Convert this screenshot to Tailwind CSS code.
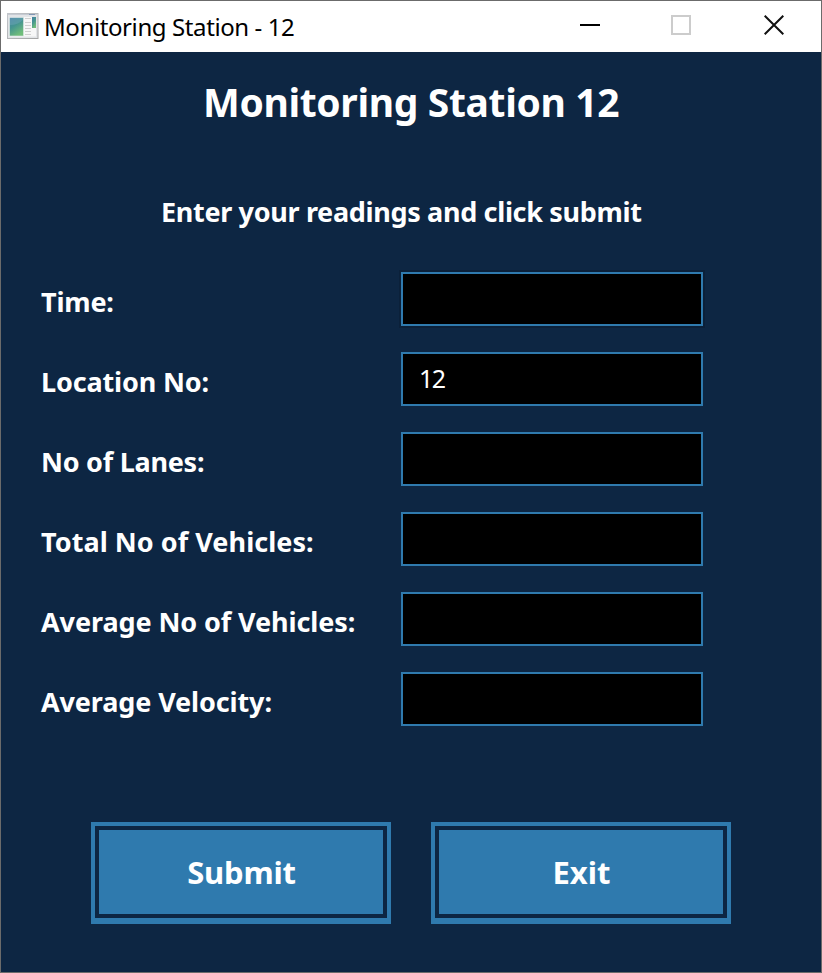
<!DOCTYPE html>
<html lang="en">
<head>
<meta charset="utf-8">
<title>Monitoring Station - 12</title>
<script src="https://cdn.jsdelivr.net/npm/@tailwindcss/browser@4"></script>
</head>
<body class="w-[822px] h-[973px] overflow-hidden font-['Noto_Sans','Open_Sans',sans-serif]">
<div class="w-[822px] h-[973px] border border-[#6b6b6b] bg-[#0d2643] flex flex-col text-white">
  <header class="h-[51px] bg-white flex items-start shrink-0 text-black">
    <svg class="ml-[6px] mt-3 shrink-0" width="32" height="26" viewBox="0 0 32 26">
      <defs>
        <linearGradient id="pane" x1="0" y1="0" x2="0.5" y2="1"><stop offset="0" stop-color="#4680a4"/><stop offset="0.5" stop-color="#459590"/><stop offset="1" stop-color="#70bd7a"/></linearGradient>
        <linearGradient id="frame" x1="0" y1="0" x2="1" y2="1"><stop offset="0" stop-color="#c2c6cb"/><stop offset="1" stop-color="#a5a5a5"/></linearGradient>
      </defs>
      <rect x="0.5" y="0.5" width="30.5" height="25" fill="#e2e4e7" stroke="url(#frame)"/>
      <path d="M1 1.5h30" stroke="#c6cbd3"/><path d="M22 1.500h6" stroke="#8197b5"/>
      <rect x="2" y="4" width="27" height="19.500" fill="#f7f7f7"/>
      <rect x="2.500" y="4.500" width="14" height="18.500" fill="url(#pane)" stroke="#dfe8e8" stroke-width=".6"/>
      <path d="M3 12q8 0 13-5V5H3z" fill="#7faec5" opacity=".35"/>
      <path d="M18 5.500h6M18 9.500h6M18 12.500h6M18 15.500h6M18 18.500h6M18 21.500h6" stroke="#cfcfcf"/>
      <rect x="25" y="4" width="4" height="11" fill="url(#pane)"/>
    </svg>
    <h1 class="ml-[5px] mt-[9px] w-[255px] whitespace-nowrap text-[24px] leading-[34px] tracking-[-0.4px]">Monitoring Station - 12</h1>
    <div class="ml-auto mt-[14px] mr-[37px] flex">
      <svg class="mr-[71px]" width="20" height="20"><path d="M0 10h20" stroke="#000" stroke-width="2"/></svg>
      <svg class="mr-[73px]" width="20" height="20"><rect x="1" y="1" width="18" height="18" fill="none" stroke="#ccc" stroke-width="2"/></svg>
      <svg width="20" height="20"><path d="M.7.7l18.600 18.600M19.300.7L.7 19.300" stroke="#111" stroke-width="2"/></svg>
    </div>
  </header>
  <main class="flex flex-col">
    <h2 class="mt-[22px] h-[56px] ml-[202px] whitespace-nowrap text-[39px] leading-[56px] font-bold tracking-[-0.35px]">Monitoring Station 12</h2>
    <p class="mt-[62px] h-[40px] ml-[160px] whitespace-nowrap text-[27px] leading-[40px] font-bold tracking-[-0.33px]">Enter your readings and click submit</p>
    <form class="mt-[40px] ml-[40px] grid grid-cols-[360px_302px] auto-rows-[54px] gap-y-[26px] text-[27px] font-bold">
      <label class="leading-[60px] whitespace-nowrap tracking-[-0.2px]">Time:</label>
      <div class="border-2 border-[#2f7aae] bg-black shadow-[0_0_0_2px_#0b2039]"></div>
      <label class="leading-[60px] whitespace-nowrap tracking-[-0.15px]">Location No:</label>
      <div class="border-2 border-[#2f7aae] bg-black pl-4 font-normal text-[25px] leading-[48px] tracking-[-1.5px]">12</div>
      <label class="leading-[60px] whitespace-nowrap tracking-[-0.25px]">No of Lanes:</label>
      <div class="border-2 border-[#2f7aae] bg-black"></div>
      <label class="leading-[60px] whitespace-nowrap tracking-[0.05px]">Total No of Vehicles:</label>
      <div class="border-2 border-[#2f7aae] bg-black"></div>
      <label class="leading-[60px] whitespace-nowrap tracking-[-0.09px]">Average No of Vehicles:</label>
      <div class="border-2 border-[#2f7aae] bg-black"></div>
      <label class="leading-[60px] whitespace-nowrap tracking-[-0.12px]">Average Velocity:</label>
      <div class="border-2 border-[#2f7aae] bg-black"></div>
    </form>
    <div class="mt-[96px] ml-[90px] flex gap-[40px] text-[31px] font-bold">
      <button class="w-[300px] h-[102px] border-4 border-b-[6px] border-[#2f7aae] p-1"><span class="block h-[84px] bg-[#2f7aae] pl-px leading-[84px] tracking-[-0.2px]">Submit</span></button>
      <button class="w-[300px] h-[102px] border-4 border-b-[6px] border-[#2f7aae] p-1"><span class="block h-[84px] bg-[#2f7aae] pl-px leading-[84px]">Exit</span></button>
    </div>
  </main>
</div>
</body>
</html>
